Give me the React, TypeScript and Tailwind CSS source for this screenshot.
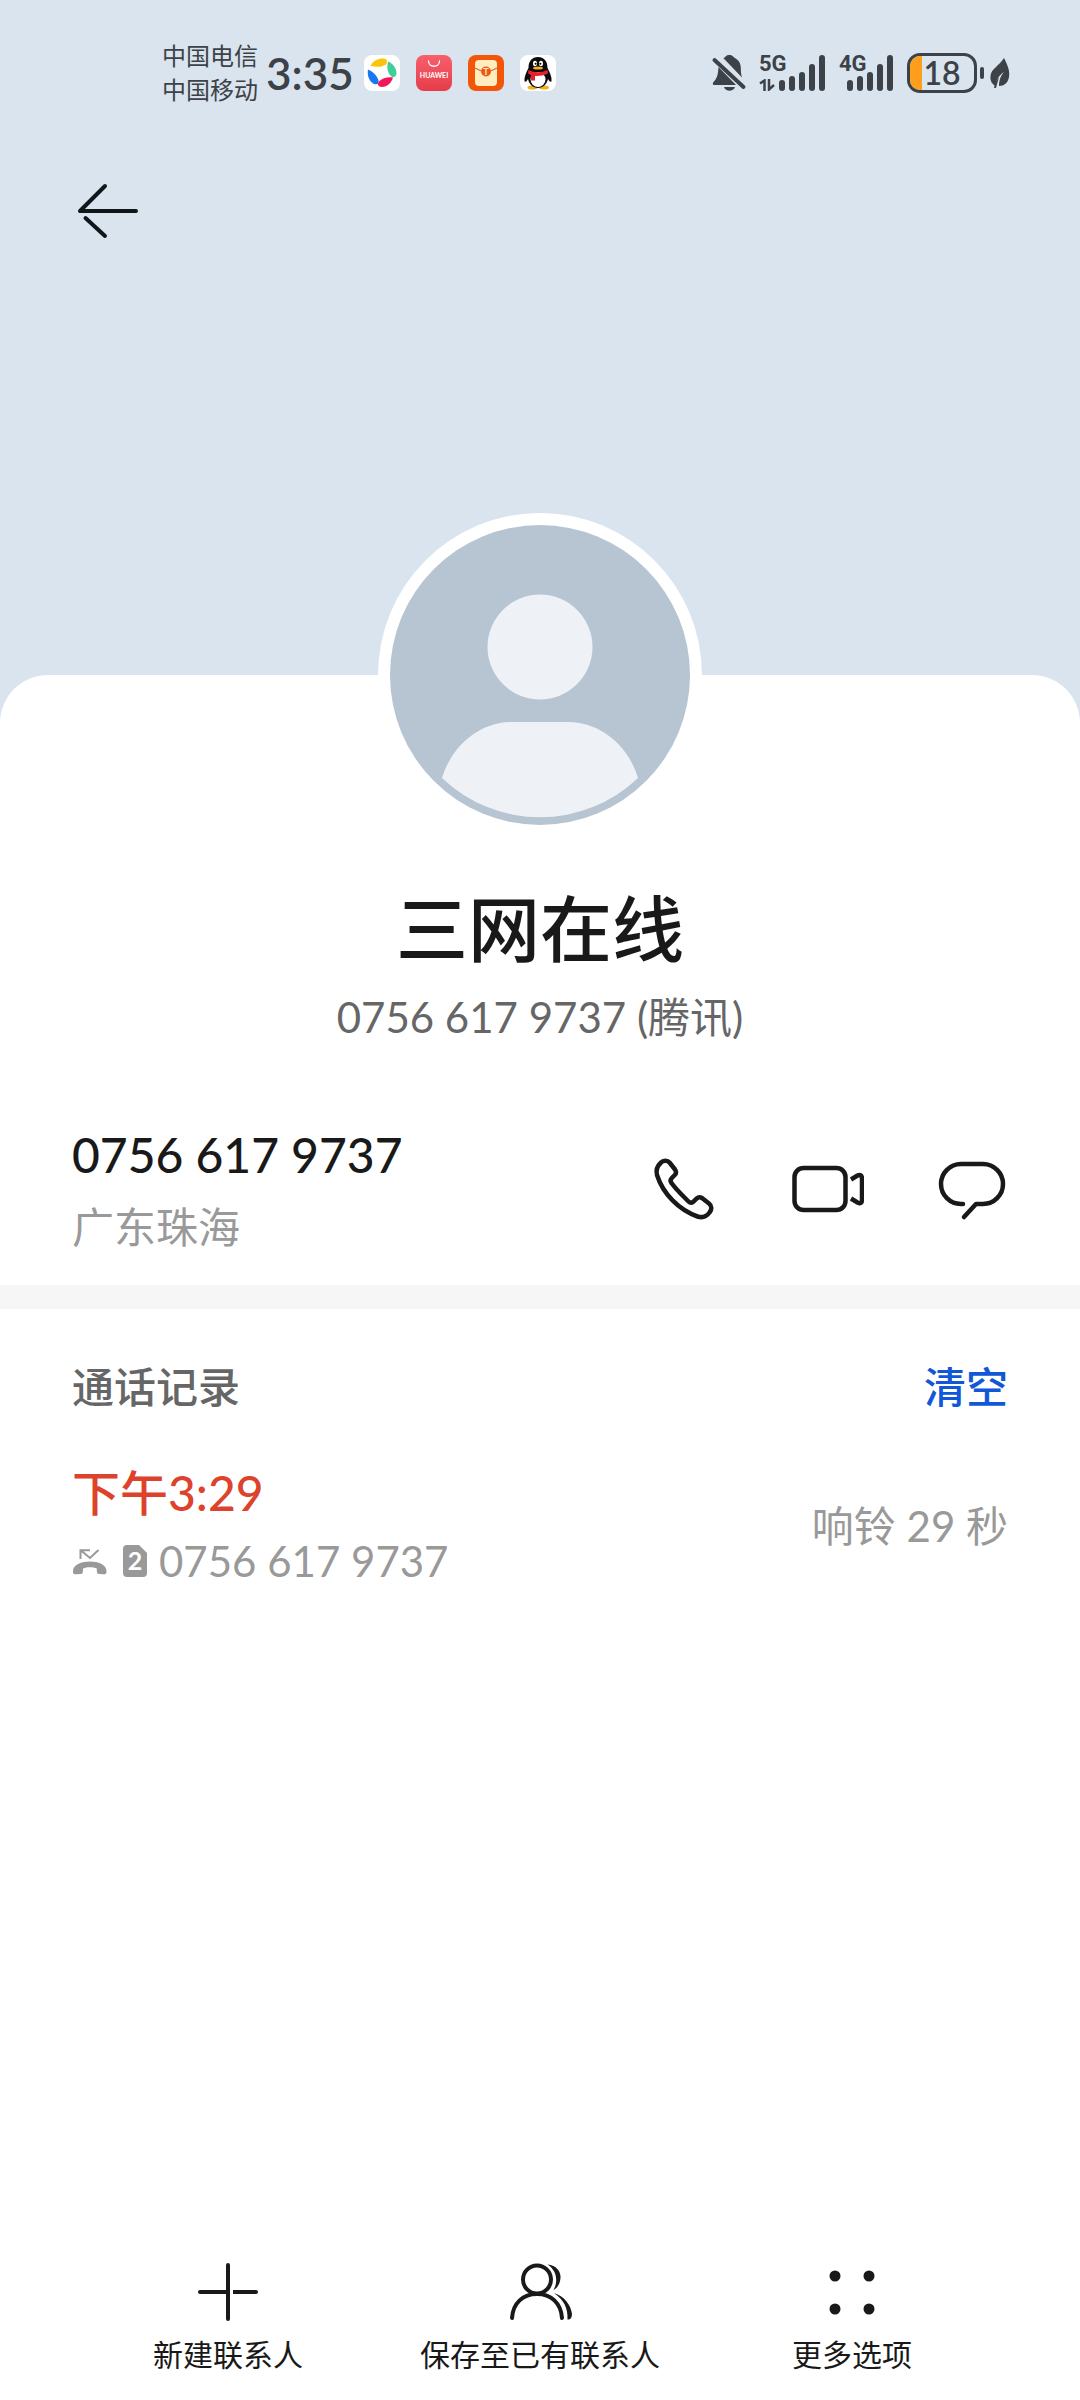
import type { ReactNode } from 'react'

/* ─── Status bar icons ─── */

const PinwheelAppIcon = () => (
  <svg className="size-9" viewBox="0 0 36 36">
    <rect width="36" height="36" rx="8" fill="#fff" />
    <path d="M6.5 11C9 5.500 14 3.500 19 3.500c5 0 5 4.500 2 6.500-4 2.500-9 2-14.500 1z" fill="#fbc408" />
    <path d="M24 6.500c5 2 8.500 6.500 8.500 11.500 0 5-4.500 5-6.500 2-3-4-3-8-2-13.500z" fill="#3fcf98" />
    <path d="M4 14.500c5 2 8 5.500 10 9.500 2 5-1 6.500-5 4.500-4-3-6-8-5-14z" fill="#1877f2" />
    <path d="M29 22.500c-2 6-6 9.500-11 9.500-5 0-5-4-2-6.500 4-3 8-3.500 13-3z" fill="#f0175d" />
  </svg>
)

const HuaweiStoreIcon = () => (
  <svg className="size-9" viewBox="0 0 36 36">
    <defs>
      <linearGradient id="store" x1="0" y1="0" x2="0" y2="1">
        <stop offset="0" stopColor="#f7606c" />
        <stop offset="1" stopColor="#e63c49" />
      </linearGradient>
    </defs>
    <rect width="36" height="36" rx="8" fill="url(#store)" />
    <path d="M12.5 6c0 7 11 7 11 0" fill="none" stroke="#fff" strokeWidth="1.3" strokeLinecap="round" />
    <text x="18" y="23" textAnchor="middle" fontSize="7" fontWeight="700" fill="#fff">HUAWEI</text>
  </svg>
)

const EnvelopeAppIcon = () => (
  <svg className="size-9" viewBox="0 0 36 36">
    <rect width="36" height="36" rx="8" fill="#f25608" />
    <rect x="7" y="5" width="22" height="26" rx="4" fill="#ffecc0" />
    <path d="M7 13q11 7 22 0" fill="none" stroke="#d8702c" strokeWidth="1.2" />
    <circle cx="18" cy="16.5" r="5" fill="#ee5a12" />
    <text x="18" y="20" textAnchor="middle" fontSize="9" fontWeight="700" fill="#ffecc0">T</text>
  </svg>
)

const PenguinAppIcon = () => (
  <svg className="size-9" viewBox="0 0 36 36">
    <rect width="36" height="36" rx="8" fill="#fff" />
    <ellipse cx="12.5" cy="32.5" rx="5" ry="2" fill="#f3b01c" />
    <ellipse cx="24" cy="32.5" rx="5" ry="2" fill="#f3b01c" />
    <path d="M18 2c-6 0-9.500 4-9.500 11C6 18 4 22 4.500 26c.5 2 2.500 0 3.500-2 1 5 5 9 10 9s9-4 10-9c1 2 3 4 3.500 2 .5-4-1.500-8-4-13C27.500 6 24 2 18 2z" fill="#0b0b0d" />
    <circle cx="18" cy="24.5" r="7.5" fill="#fff" />
    <ellipse cx="15" cy="8.5" rx="2" ry="2.8" fill="#fff" />
    <ellipse cx="21" cy="8.5" rx="2" ry="2.8" fill="#fff" />
    <circle cx="15.6" cy="8.8" r="1" fill="#000" />
    <circle cx="20.4" cy="8.8" r="1" fill="#000" />
    <ellipse cx="18" cy="13" rx="5" ry="1.6" fill="#f3b01c" />
    <path d="M8.500 15q9.500 4.500 19 0l.5 3.500q-6.500 3-13 2.500v4.500h-4V20q-2-1-3-1.500z" fill="#e8202c" />
  </svg>
)

const MutedBellIcon = () => (
  <svg className="h-9 w-8 overflow-visible" viewBox="0 0 32 36" fill="#3c4247">
    <path d="M10.500 3.200C12.500 2.300 13 0 16.300 0s4 2 6 3.200c4 2.300 5.500 5.800 5.500 9.800 0 3.500.3 6.500 1.200 9.500z" />
    <path d="M5.500 12l17.500 18H1c-1.500 0-1.500-2-.5-3 4-4 4.500-8 5-15z" />
    <path d="M11 32h11c-1.500 5-9.500 5-11 0z" />
    <path d="M1.500 5l29 27" stroke="#3c4247" strokeWidth="4" strokeLinecap="round" />
  </svg>
)

const DataArrows = () => (
  <svg className="absolute bottom-0 left-0 h-3 w-4" viewBox="0 0 16 12" fill="none" stroke="#3c4247" strokeWidth="2.5">
    <path d="M1 4.500L5.500 1.500V12M10 0v10.500L15 6" />
  </svg>
)

function Signal({ label, data }: { label: string; data?: boolean }) {
  return (
    <div className={`relative flex h-9 justify-end ${data ? 'w-[66px]' : 'w-[54px]'}`}>
      <span className="absolute top-0 left-0 font-[Roboto,sans-serif] text-[22px] leading-[18px] font-bold">{label}</span>
      {data && <DataArrows />}
      <svg className="h-9 w-[46px]" viewBox="0 0 46 36" fill="#3c4247">
        <rect x="0" y="25" width="6" height="11" rx="3" />
        <rect x="10" y="21" width="6" height="15" rx="3" />
        <rect x="20" y="17" width="6" height="19" rx="3" />
        <rect x="30" y="9" width="6" height="27" rx="3" />
        <rect x="40" y="0" width="6" height="36" rx="3" />
      </svg>
    </div>
  )
}

const Battery = () => (
  <div className="flex items-center gap-[3px]">
    <div className="flex h-10 w-[70px] items-center overflow-hidden rounded-[13px] border-[3px] border-[#3c4247]">
      <div className="h-full w-3 bg-[#ff9d1c]" />
      <span className="flex-1 pr-3 text-center text-[32px] leading-[34px] font-semibold">18</span>
    </div>
    <div className="h-3 w-1 rounded-full bg-[#3c4247]" />
  </div>
)

const LeafIcon = () => (
  <svg className="h-[30px] w-5" viewBox="0 0 20 30" fill="#3c4247">
    <path d="M14 0c4 8 6 13 5 19-1 6-5 9-10 9 0-5 1-9 5-14-6 4-8 9-8.500 14C2 26 0 23 .5 18 1 11 9 8 14 0z" />
    <path d="M9 19l-3 11H4l1.500-6z" />
  </svg>
)

/* ─── Page icons ─── */

const BackIcon = () => (
  <svg className="size-[72px]" viewBox="0 0 72 72" fill="none" stroke="#111719" strokeWidth="4" strokeLinecap="round" strokeLinejoin="round">
    <path d="M33 12L8 37h56" />
    <path d="M13.500 44l19.500 18" />
  </svg>
)

const DefaultAvatar = () => (
  <svg className="size-[300px]" viewBox="0 0 300 300">
    <circle cx="150" cy="150" r="150" fill="#b7c4d2" />
    <circle cx="150" cy="122" r="52.5" fill="#eef2f6" />
    <path d="M52 253C62 220 90 197 122 197h56c32 0 60 23 70 56A142 142 0 0 1 52 253z" fill="#eef2f6" />
  </svg>
)

const PhoneIcon = () => (
  <svg className="size-[72px]" viewBox="0 0 72 72" fill="none" stroke="#191919" strokeWidth="4.5" strokeLinejoin="round">
    <path d="M13 8.500C15 6.200 19.500 6 21.500 8.500L27 15.500c1.500 2 1.500 3.500 0 5.200L23.800 24c-1.500 1.600-1.500 3.500-.3 5 5 7 11 12.500 17 18.500 1.500 1.500 3 1.800 4.700.3l3.300-3.200c1.700-1.600 3.500-1.800 5.500-.6l7 5.500c3 2.300 3 6 .5 9C58.500 62.500 54 64 49.500 62.500 31 56 15 40 9 21 7.800 16.500 9.500 11.800 13 8.500z" />
  </svg>
)

const VideoIcon = () => (
  <svg className="size-[72px]" viewBox="0 0 72 72" fill="none" stroke="#191919" strokeWidth="4.5" strokeLinejoin="round">
    <rect x="2.5" y="14" width="51" height="42" rx="9" />
    <path d="M59 25.500l6.500-4Q69.500 19.500 70 24v22.500Q69.500 50.500 65.500 48.500l-6.500-4" />
  </svg>
)

const MessageIcon = () => (
  <svg className="size-[72px]" viewBox="0 0 72 72" fill="none" stroke="#191919" strokeWidth="4.5" strokeLinecap="round" strokeLinejoin="round">
    <path d="M27 50h-2a20 20 0 0 1 0-40h22a20 20 0 0 1 0 40h-7L28 63" />
  </svg>
)

const MissedCallIcon = () => (
  <svg className="h-8 w-9" viewBox="0 0 36 32" fill="#999">
    <path d="M8.500 14V5.200H18M9 5.500l9 7.500 8.500-8" fill="none" stroke="#999" strokeWidth="2" />
    <path d="M18 16.500c8 0 16.500 3 16.500 9.500 0 3-.5 3.300-3.500 3.300l-4-.3c-2.500-.3-2-2-2.200-5.500-3.800-1.700-9.800-1.700-13.800 0-.2 3.500.3 5.200-2 5.500l-4 .3C1.500 29.300 1 29 1 26c0-6.500 9-9.500 17-9.500z" />
  </svg>
)

const SimTwoIcon = () => (
  <svg className="h-8 w-6 overflow-visible" viewBox="0 0 24 32">
    <path d="M4 0h12l8 8v20a4 4 0 0 1-4 4H4a4 4 0 0 1-4-4V4a4 4 0 0 1 4-4z" fill="#999" />
    <text x="12" y="25" textAnchor="middle" fontSize="25" fontWeight="700" fill="#fff">2</text>
  </svg>
)

const PlusIcon = () => (
  <svg className="size-16" viewBox="0 0 64 64" stroke="#191919" strokeWidth="4" strokeLinecap="round">
    <path d="M32 5v54M4 32h28M60 32h-9" />
    <path d="M37 32h16" strokeLinecap="butt" />
  </svg>
)

const ContactsIcon = () => (
  <svg className="size-16 overflow-visible" viewBox="0 0 64 64" fill="#191919">
    <g fill="none" stroke="#191919" strokeWidth="4" strokeLinecap="round">
      <circle cx="29" cy="19.5" r="14" />
      <path d="M4 58C5 43 15 34 29 34s24 9 25 24" />
    </g>
    <path d="M39.500 4.500C49 5.500 53 12 52.500 18c-.5 6-3 10-7 12C50 22 49.500 11 39.500 4.500z" />
    <path d="M46 33c10 3 17 12 18 21 0 4-2 6-4.500 5.500C60 48 56 40 46 33z" />
  </svg>
)

const MoreIcon = () => (
  <svg className="size-16" viewBox="0 0 64 64" fill="#191919">
    <circle cx="15" cy="16" r="5.5" />
    <circle cx="49" cy="16" r="5.5" />
    <circle cx="15" cy="49" r="5.5" />
    <circle cx="49" cy="49" r="5.5" />
  </svg>
)

/* ─── Data ─── */

const NUMBER = '0756 617 9737'

const CONTACT_ACTIONS: { label: string; icon: ReactNode }[] = [
  { label: '拨打电话', icon: <PhoneIcon /> },
  { label: '视频通话', icon: <VideoIcon /> },
  { label: '发送信息', icon: <MessageIcon /> },
]

const TOOLBAR: { label: string; icon: ReactNode }[] = [
  { label: '新建联系人', icon: <PlusIcon /> },
  { label: '保存至已有联系人', icon: <ContactsIcon /> },
  { label: '更多选项', icon: <MoreIcon /> },
]

function StatusBar() {
  return (
    <div className="flex items-center justify-between pt-[39px] pr-[70px] pl-[162px] text-[#3c4247]">
      <div className="flex items-center">
        <div className="text-2xl leading-[34px]">
          <p>中国电信</p>
          <p>中国移动</p>
        </div>
        <span className="ml-2 text-[44px] leading-[56px] font-semibold">3:35</span>
        <div className="ml-2.5 flex gap-4">
          <PinwheelAppIcon />
          <HuaweiStoreIcon />
          <EnvelopeAppIcon />
          <PenguinAppIcon />
        </div>
      </div>
      <div className="flex items-center gap-3.5">
        <MutedBellIcon />
        <Signal label="5G" data />
        <Signal label="4G" />
        <div className="flex items-center gap-1.5">
          <Battery />
          <LeafIcon />
        </div>
      </div>
    </div>
  )
}

export default function App() {
  return (
    <div className="flex min-h-screen flex-col bg-[#dae4ee] font-[Lato,'Noto_Sans_CJK_SC',sans-serif] text-[#191919]" lang="zh-CN">
      <StatusBar />

      <nav className="mt-[67px] flex px-[72px]">
        <button type="button" aria-label="返回">
          <BackIcon />
        </button>
      </nav>

      <main className="mt-[429px] flex flex-1 flex-col rounded-t-[48px] bg-white">
        {/* Profile */}
        <header className="-mt-[162px] flex flex-col items-center">
          <div className="rounded-full bg-white p-3">
            <DefaultAvatar />
          </div>
          <h1 className="mt-[51px] text-7xl leading-[80px] font-medium">三网在线</h1>
          <p className="mt-[23px] text-[42px] leading-[52px] text-[#666]">{NUMBER} (腾讯)</p>
        </header>

        {/* Number */}
        <section className="mt-[84px] flex items-center justify-between px-[72px] pb-8">
          <div>
            <p className="text-5xl leading-[56px] font-medium">{NUMBER}</p>
            <p className="mt-[18px] text-[42px] leading-[52px] text-[#999]">广东珠海</p>
          </div>
          <div className="flex gap-[72px]">
            {CONTACT_ACTIONS.map((action) => (
              <button key={action.label} type="button" aria-label={action.label}>
                {action.icon}
              </button>
            ))}
          </div>
        </section>

        <div className="h-6 bg-[#f6f6f6]" />

        {/* Call log */}
        <section className="px-[72px] pt-[52px]">
          <div className="flex items-center justify-between text-[42px] leading-[52px] font-medium">
            <h2 className="text-[#666]">通话记录</h2>
            <button type="button" className="text-[#1257d8]">清空</button>
          </div>
          <div className="mt-[52px] flex items-center justify-between text-[42px] leading-[52px] text-[#999]">
            <div>
              <p className="text-5xl leading-[56px] font-medium text-[#dd432c]">下午3:29</p>
              <div className="mt-3.5 flex items-center">
                <MissedCallIcon />
                <span className="ml-[15px]"><SimTwoIcon /></span>
                <span className="ml-3">{NUMBER}</span>
              </div>
            </div>
            <span>响铃 29 秒</span>
          </div>
        </section>

        {/* Toolbar */}
        <footer className="mt-auto grid grid-cols-3 px-[72px] pb-[26px]">
          {TOOLBAR.map((item) => (
            <button key={item.label} type="button" className="flex flex-col items-center gap-2.5 text-[30px] leading-10 whitespace-nowrap">
              {item.icon}
              {item.label}
            </button>
          ))}
        </footer>
      </main>
    </div>
  )
}
